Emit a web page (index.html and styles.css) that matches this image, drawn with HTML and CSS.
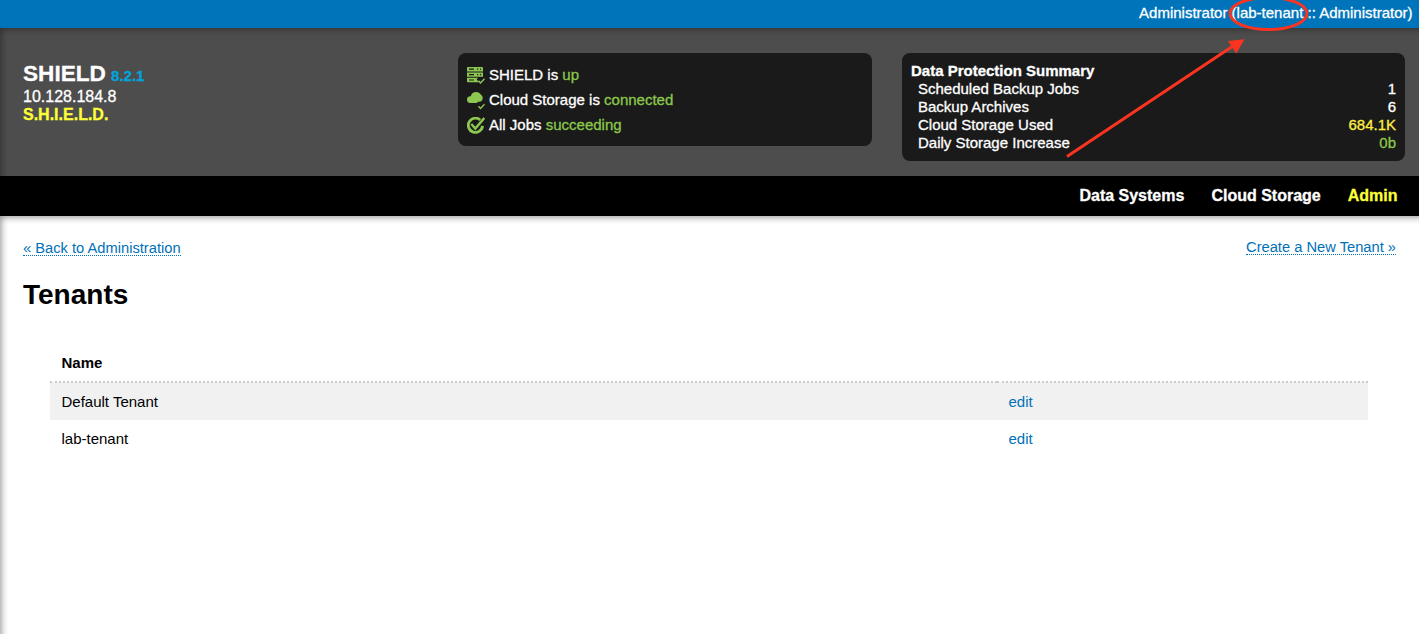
FILE: index.html
```html
<!DOCTYPE html>
<html lang="en">
<head>
<meta charset="utf-8">
<title>SHIELD</title>
<link rel="stylesheet" href="styles.css">
</head>
<body>
<div class="topbar"><span class="account">Administrator (lab-tenant :: Administrator)</span></div>
<header class="header">
  <div class="brand">
    <div class="brand-name"><span class="product">SHIELD</span> <span class="version">8.2.1</span></div>
    <div class="ip"><span>10.128.184.8</span></div>
    <div class="motto"><span>S.H.I.E.L.D.</span></div>
  </div>
  <ul class="status">
    <li>
      <svg class="icon" viewBox="0 0 18 18"><path fill-rule="evenodd" d="M1 0h14q1 0 1 1v3.500H0V1q0-1 1-1zM2 1.600v1.200h5v-1.200zM10 1.600v1.200h1.200v-1.200zM13 1.600v1.200h1.200v-1.200zM0 5.500h16v4.300H0zM2 7v1.200h5V7zM10 7v1.200h1.200V7zM13 7v1.200h1.200V7zM0 10.800h11l-1.400 1.700 2.400 2.700H1q-1 0-1-1zM2 12.400v1.200h5v-1.200z"/><path class="tick" d="M11.500 13.800l2 2.100 4-4.200"/></svg>
      <span class="status-text">SHIELD is <b>up</b></span>
    </li>
    <li>
      <svg class="icon" viewBox="0 0 18 18"><path d="M3.500 11A3.600 3.600 0 0 1 0 7.400C0 5 2 3.900 3.800 4.200 4.400 1.500 6.500.1 9 .1c2.500 0 4 .9 4.700 2.500C15.300 3.500 15.900 5 15.600 6.900c-.4 2.400-2.400 2.900-4.300 2.900L9.500 11z"/><path class="tick" d="M11.500 14.300l2 2.100 4-4.200"/></svg>
      <span class="status-text">Cloud Storage is <b>connected</b></span>
    </li>
    <li>
      <svg class="icon" viewBox="0 0 18 18"><path class="ring" d="M13.200 3A7.100 7.100 0 1 0 15.500 8.800"/><path class="check" d="M4.300 7l4 4.500L17.300 1"/></svg>
      <span class="status-text">All Jobs <b>succeeding</b></span>
    </li>
  </ul>
  <section class="summary">
    <h2><span>Data Protection Summary</span></h2>
    <dl>
      <div><dt>Scheduled Backup Jobs</dt><dd>1</dd></div>
      <div><dt>Backup Archives</dt><dd>6</dd></div>
      <div><dt>Cloud Storage Used</dt><dd class="warn">684.1K</dd></div>
      <div><dt>Daily Storage Increase</dt><dd class="good">0b</dd></div>
    </dl>
  </section>
</header>
<nav class="nav"><a>Data Systems</a><a>Cloud Storage</a><a class="active">Admin</a></nav>
<main class="main">
  <div class="links"><a class="back">« Back to Administration</a><a class="create">Create a New Tenant »</a></div>
  <h1>Tenants</h1>
  <table>
    <thead><tr><th class="name">Name</th><th></th></tr></thead>
    <tbody>
      <tr><td>Default Tenant</td><td><a>edit</a></td></tr>
      <tr><td>lab-tenant</td><td><a>edit</a></td></tr>
    </tbody>
  </table>
</main>
<svg class="annotation" viewBox="0 0 1419 170"><ellipse cx="1268.500" cy="13.500" rx="38.500" ry="16"/><path d="M1067 156.500L1233 46"/><path class="head" d="M1244.500 39.300l-16.500 1.600 8.300 12.600z"/></svg>
</body>
</html>
```

FILE: styles.css
```css
* { box-sizing: border-box; }
html, body { margin: 0; height: 100%; }
body {
  display: flex;
  flex-direction: column;
  overflow: hidden;
  background: #fff;
  color: #000;
  font: 15px/18px "Liberation Sans", Arial, sans-serif;
}
h1, h2, ul, dl, dd { margin: 0; padding: 0; }
.topbar, .header, .nav { -webkit-text-stroke: .3px currentColor; }
.topbar {
  height: 28px;
  flex: none;
  padding: 4px 6.5px 0 0;
  background: #0074bb;
  color: #fff;
  text-align: right;
}
.header {
  height: 148px;
  flex: none;
  display: flex;
  align-items: flex-start;
  padding: 25px 14px 0 23px;
  background: #4d4d4d;
  color: #fff;
  box-shadow: inset 5px 5px 7px -4px rgba(0, 0, 0, .4);
}
.brand { width: 435px; padding-top: 8px; }
.brand-name { height: 27px; line-height: 25px; font-weight: bold; }
.product { font-size: 22.6px; }
.version { margin-left: 1px; color: #00a4db; font-size: 15px; }
.ip { font-size: 16px; }
.motto { color: #ffff38; font-size: 16px; font-weight: bold; }
.status, .summary { background: #1a1a1a; border-radius: 8px; }
.status {
  width: 414px;
  height: 93px;
  margin-right: 30px;
  padding: 9px;
  list-style: none;
}
.status li { display: flex; align-items: center; height: 25px; }
.status b { color: #8bc84b; font-weight: normal; }
.icon { width: 18px; height: 18px; margin: 2px 4px 0 0; fill: #8cc751; }
.tick, .ring, .check { fill: none; stroke: #8cc751; }
.tick { stroke-width: 1.5; }
.ring { stroke-width: 2.8; }
.check { stroke-width: 2.5; }
.summary { flex: 1; height: 108px; padding: 9px; }
.summary h2 { font-size: 15px; line-height: 18px; }
.summary dl { padding-left: 7px; }
.summary dl div { display: flex; justify-content: space-between; }
.summary .warn { color: #ffef43; }
.summary .good { color: #8bc84b; }
.nav {
  height: 40px;
  flex: none;
  display: flex;
  justify-content: flex-end;
  gap: 27px;
  padding: 11px 21.5px 0 0;
  background: #000;
  color: #fff;
  font-size: 16px;
  font-weight: bold;
}
.nav .active { color: #ffff38; }
.main {
  flex: 1;
  padding: 22px 23px 0;
  box-shadow: inset 5px 5px 7px -4px rgba(0, 0, 0, .45);
}
.links { display: flex; justify-content: space-between; align-items: flex-start; }
.main a { color: #0071b8; }
.links a { border-bottom: 1px dotted #0071b8; font-size: 14.7px; line-height: 14px; }
.links .create { padding-top: 2px; }
.links .back { padding-top: 3px; }
h1 { margin-top: 22px; font-size: 28px; line-height: 34px; }
table {
  width: 1318px;
  margin: 32px 0 0 27px;
  border-collapse: collapse;
  table-layout: fixed;
}
th, td { height: 37px; padding: 0 12px 0 11.5px; text-align: left; }
th { height: 38px; border-bottom: 2px dotted #ccc; }
.name { width: 947px; }
tbody tr:first-child td { height: 38px; }
tbody tr:nth-child(odd) { background: #f1f1f1; }
.annotation {
  position: absolute;
  top: 0;
  left: 0;
  width: 1419px;
  height: 170px;
  fill: none;
  stroke: #fa3420;
  stroke-width: 3;
  pointer-events: none;
}
.annotation .head { fill: #fa3420; stroke: none; }
```
